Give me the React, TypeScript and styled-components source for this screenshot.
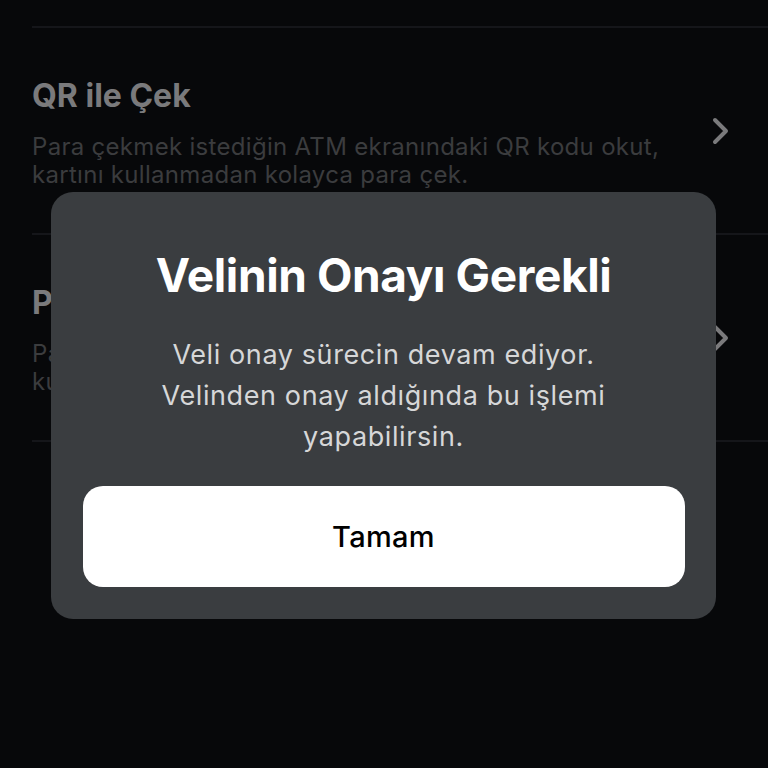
import React from "react";
import styled, { createGlobalStyle } from "styled-components";

const Global = createGlobalStyle`
  html, body { margin: 0; padding: 0; background: #07080a; }
  body { font-family: Inter, "Noto Sans", sans-serif; }
  * { box-sizing: border-box; }
`;

const Screen = styled.div`
  position: relative;
  width: 768px;
  height: 768px;
  overflow: hidden;
  background: #07080a;
  padding-top: 26px;
`;

const List = styled.div`
  display: flex;
  flex-direction: column;
  padding-left: 32px;
`;

const Divider = styled.div`
  height: 2px;
  background: #15161a;
`;

const Item = styled.div`
  display: flex;
  align-items: center;
  height: 205px;
  padding-right: 36px;
`;

const ItemText = styled.div`
  flex: 1;
  display: flex;
  flex-direction: column;
  gap: 18px;
  padding-top: 4px;
`;

const ItemTitle = styled.div`
  font-size: 32px;
  font-weight: 700;
  color: #7a7a7c;
  letter-spacing: 0px;
`;

const ItemDesc = styled.div`
  font-size: 24px;
  line-height: 28px;
  color: #3b3c3e;
  letter-spacing: 0.3px;
`;

const Chevron = () => (
  <svg width="22" height="30" viewBox="0 0 22 30">
    <path d="M5 4 L16 15 L5 26" fill="none" stroke="#7a7a7c" strokeWidth="4" strokeLinecap="round" strokeLinejoin="round" />
  </svg>
);

const Overlay = styled.div`
  position: absolute;
  left: 51px;
  top: 192px;
  width: 665px;
  height: 427px;
  background: #3a3d40;
  border-radius: 22px;
  display: flex;
  flex-direction: column;
  align-items: center;
  padding: 55px 32px 32px;
`;

const DialogTitle = styled.div`
  font-size: 46px;
  font-weight: 700;
  color: #ffffff;
  line-height: 56px;
  letter-spacing: -0.4px;
`;

const DialogBody = styled.div`
  margin-top: 31px;
  font-size: 27px;
  line-height: 41px;
  color: #d6d7d8;
  text-align: center;
  letter-spacing: 0.6px;
`;

const OkButton = styled.button`
  margin-top: auto;
  width: 602px;
  height: 101px;
  border: none;
  border-radius: 20px;
  background: #ffffff;
  color: #000;
  font-family: Inter, "Noto Sans", sans-serif;
  font-size: 29px;
  font-weight: 500;
  letter-spacing: 0.3px;
`;

export default function App() {
  return (
    <Screen>
      <Global />
      <List>
        <Divider />
        <Item>
          <ItemText>
            <ItemTitle>QR ile Çek</ItemTitle>
            <ItemDesc>
              Para çekmek istediğin ATM ekranındaki QR kodu okut,
              <br />
              kartını kullanmadan kolayca para çek.
            </ItemDesc>
          </ItemText>
          <Chevron />
        </Item>
        <Divider />
        <Item>
          <ItemText>
            <ItemTitle>Para Çekme Kodu</ItemTitle>
            <ItemDesc>
              Para çekme kodu oluştur, ATM'den
              <br />
              kullanmadan kolayca para çek.
            </ItemDesc>
          </ItemText>
          <Chevron />
        </Item>
        <Divider />
      </List>
      <Overlay>
        <DialogTitle>Velinin Onayı Gerekli</DialogTitle>
        <DialogBody>
          Veli onay sürecin devam ediyor.
          <br />
          Velinden onay aldığında bu işlemi
          <br />
          yapabilirsin.
        </DialogBody>
        <OkButton>Tamam</OkButton>
      </Overlay>
    </Screen>
  );
}
